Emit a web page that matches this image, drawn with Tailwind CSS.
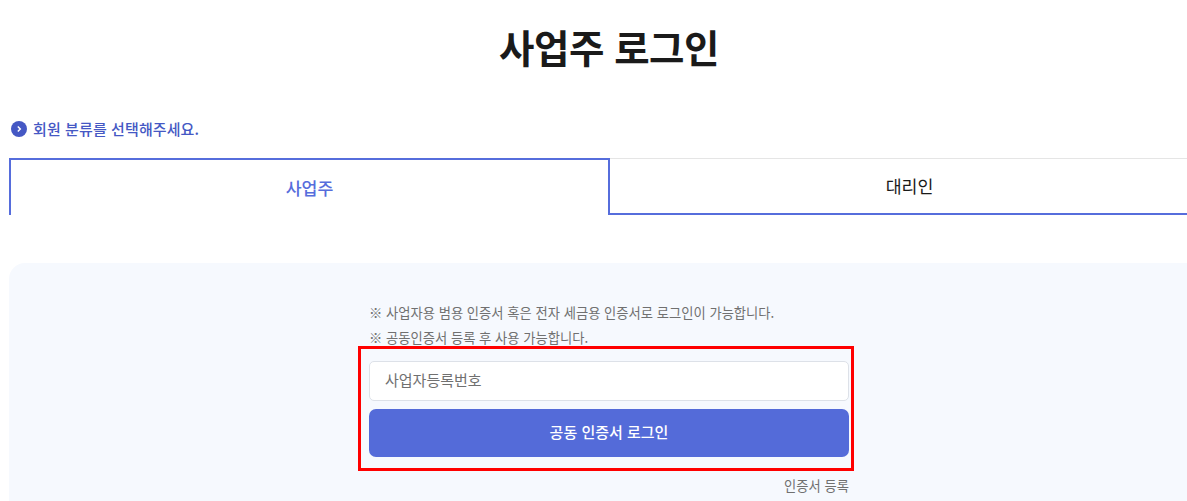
<!DOCTYPE html>
<html lang="ko">
<head>
<meta charset="utf-8">
<script src="https://cdn.jsdelivr.net/npm/@tailwindcss/browser@4"></script>
</head>
<body class="bg-white">
<div class="h-[501px] w-[1187px] overflow-hidden font-['Noto_Sans_CJK_KR','Noto_Sans',sans-serif]">
  <div class="ml-[9px] w-[1200px]">
    <h1 class="pt-[17px] text-center text-[38.5px] leading-[58px] font-bold tracking-[-0.5px] text-[#1a1a1a]">사업주 로그인</h1>
    <div class="mt-[42px] flex h-[24px] items-center gap-[6px] pl-[2px]">
      <svg width="16" height="16" viewBox="0 0 16 16"><circle cx="8" cy="8" r="8" fill="#4558c4"/><path d="M6.8 5.4 9.3 8l-2.5 2.6" fill="none" stroke="#fff" stroke-width="1.5"/></svg>
      <p class="text-[15px] leading-[24px] font-medium tracking-[0.1px] text-[#4558c4]">회원 분류를 선택해주세요.</p>
    </div>
    <div class="mt-[17px] flex h-[57px]">
      <div class="flex w-[601px] items-center justify-center border-x-2 border-t-2 border-[#566ddc] text-[17.3px] font-medium text-[#566ddc]">사업주</div>
      <div class="flex flex-1 items-center justify-center border-t border-b-2 border-t-[#e5e5e5] border-b-[#566ddc] text-[17.3px] text-[#1a1a1a]">대리인</div>
    </div>
    <div class="mt-[48px] h-[260px] rounded-t-2xl bg-[#f6f9fe] pt-[37px]">
      <div class="mx-auto w-[480px]">
        <p class="h-[25px] text-[13.3px] leading-[25px] whitespace-nowrap text-[#707070]">※ 사업자용 범용 인증서 혹은 전자 세금용 인증서로 로그인이 가능합니다.</p>
        <p class="h-[25px] text-[13.3px] leading-[25px] whitespace-nowrap text-[#707070]">※ 공동인증서 등록 후 사용 가능합니다.</p>
        <div class="mt-[-4px] -mr-[5px] -ml-[11px] border-[3px] border-[#ff0000] pt-[12px] pr-[2px] pb-[11px] pl-[8px]">
          <input type="text" placeholder="사업자등록번호" class="block h-[40px] w-full rounded-[5px] border border-[#dde1e8] bg-white px-[15px] pb-[3px] text-[15px] text-[#333] outline-none placeholder:text-[#707070]">
          <button class="mt-[8px] block h-[48px] w-full rounded-[7px] bg-[#546bd9] pb-[1px] text-[15px] font-medium text-white">공동 인증서 로그인</button>
        </div>
        <p class="mt-[5px] text-right text-[13.3px] leading-[20px] text-[#707070]">인증서 등록</p>
      </div>
    </div>
  </div>
</div>
</body>
</html>
